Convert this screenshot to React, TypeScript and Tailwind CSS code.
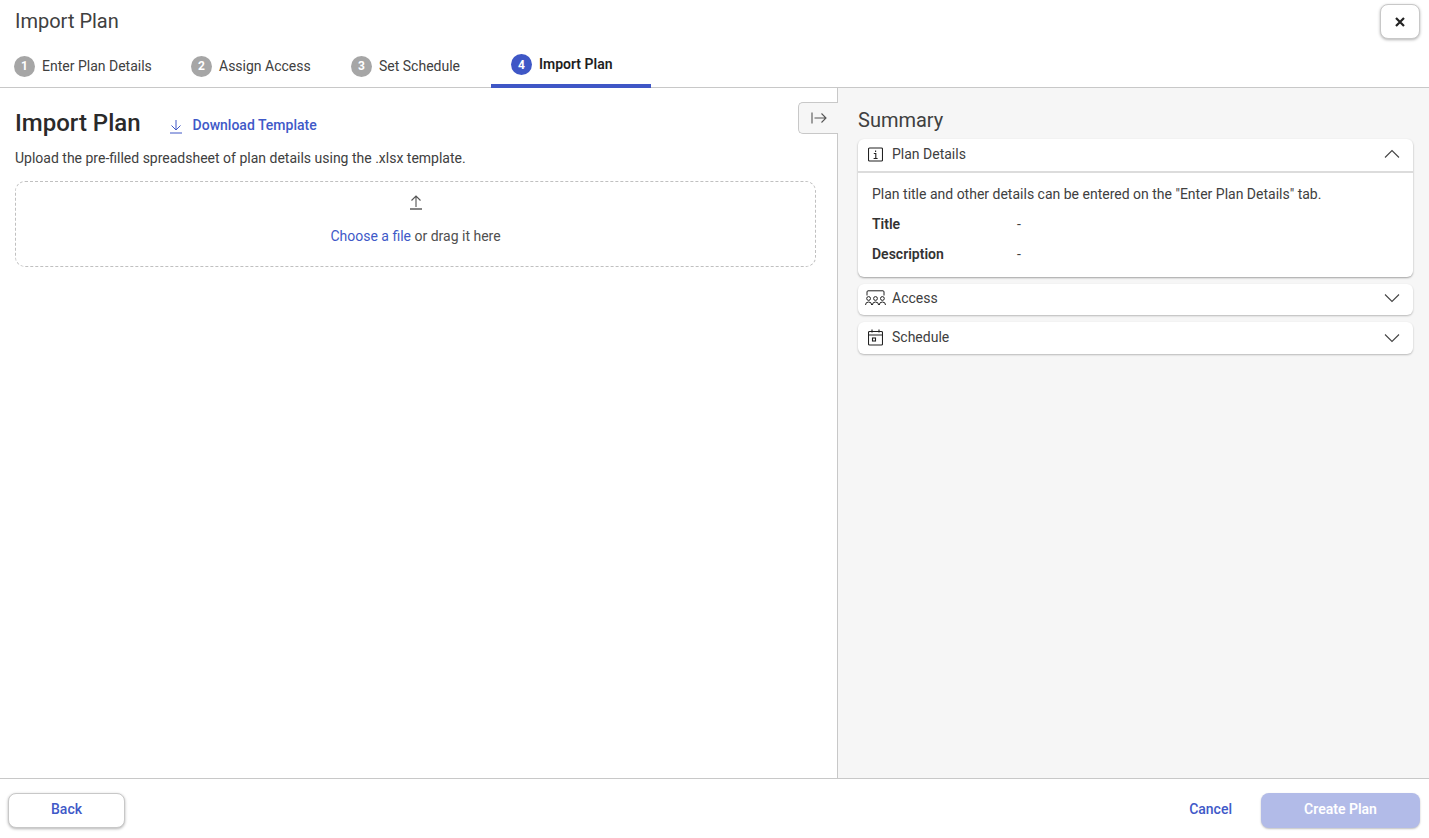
const blue = "text-[#4059c8]";

function Step({ n, label, active, first }: { n: number; label: string; active?: boolean; first?: boolean }) {
  return (
    <div
      className={`flex items-center gap-[7px] ${first ? "w-[171px] pl-[14px]" : "w-[160px] pl-[20px]"} ${
        active ? "h-[40px] pb-[3px] border-b-4 border-[#3f57c6]" : "h-[40px] pb-[4px]"
      }`}
    >
      <span
        className={`flex h-[21px] w-[21px] items-center justify-center rounded-full text-[12px] font-bold text-white ${
          active ? "bg-[#3f57c6]" : "bg-[#a6a6a6]"
        }`}
      >
        {n}
      </span>
      <span className={`text-[14px] ${active ? "font-semibold text-[#1f1f1f]" : "text-[#404040]"}`}>{label}</span>
    </div>
  );
}

function Chevron({ up }: { up?: boolean }) {
  return (
    <svg width="16" height="10" viewBox="0 0 16 10" fill="none" stroke="#444" strokeWidth="1.1">
      <path d={up ? "M1 8.5 L8 1.5 L15 8.5" : "M1 1.5 L8 8.5 L15 1.5"} />
    </svg>
  );
}

function InfoIcon() {
  return (
    <svg width="15" height="15" viewBox="0 0 15 15" fill="none" stroke="#222" strokeWidth="1.1">
      <rect x="0.5" y="1" width="14" height="13" rx="1" />
      <path d="M5.8 6.5 H7.8 V11.5 M5.6 11.5 H9.6 M7.6 3.4 V5" />
    </svg>
  );
}

function AccessIcon() {
  return (
    <svg width="21" height="16" viewBox="0 0 21 16" fill="none" stroke="#222" strokeWidth="1">
      <path d="M2 5.5 V2 Q2 0.8 3 0.8 H18 Q19 0.8 19 2 V5.5" />
      <circle cx="3.6" cy="8.5" r="1.9" />
      <circle cx="10.5" cy="8.5" r="1.9" />
      <circle cx="17.4" cy="8.5" r="1.9" />
      <path d="M0.5 15 Q0.5 12 3.6 12 Q6.7 12 6.7 15 M7.4 15 Q7.4 12 10.5 12 Q13.6 12 13.6 15 M14.3 15 Q14.3 12 17.4 12 Q20.5 12 20.5 15" />
    </svg>
  );
}

function CalendarIcon() {
  return (
    <svg width="15" height="17" viewBox="0 0 15 17" fill="none" stroke="#222" strokeWidth="1.1">
      <rect x="0.5" y="2.5" width="14" height="13.5" rx="1" />
      <path d="M0.5 6 H14.5 M4 0.5 V3.5 M11 0.5 V3.5" />
      <rect x="4.5" y="9" width="3" height="3" />
    </svg>
  );
}

function PanelHeader({ icon, label, up }: { icon: React.ReactNode; label: string; up?: boolean }) {
  return (
    <div className="flex flex-1 items-center justify-between pr-[13px]">
      <div className="flex items-center">
        <span className="flex w-[34px] justify-center">{icon}</span>
        <span className="text-[14px] text-[#404040]">{label}</span>
      </div>
      <Chevron up={up} />
    </div>
  );
}

export default function App() {
  return (
    <div className="flex h-screen w-full flex-col overflow-hidden bg-white font-['Roboto',sans-serif]">
      {/* Header */}
      <div className="relative h-[88px] shrink-0 border-b border-[#c8c8c8]">
        <div className="flex h-[47px] items-start justify-between pl-[15px] pr-[9px]">
          <h1 className="mt-[8px] text-[20px] leading-[26px] text-[#404040]">Import Plan</h1>
          <button className="mt-[4px] flex h-[35px] w-[40px] items-center justify-center rounded-[8px] border border-[#c8c8c8] bg-white shadow-[0_1px_3px_rgba(0,0,0,0.3)]">
            <svg width="12" height="12" viewBox="0 0 12 12" fill="none" stroke="#222" strokeWidth="2.2">
              <path d="M2 2 L10 10 M10 2 L2 10" />
            </svg>
          </button>
        </div>
        <div className="absolute bottom-[-1px] left-0 flex items-center">
          <Step n={1} label="Enter Plan Details" first />
          <Step n={2} label="Assign Access" />
          <Step n={3} label="Set Schedule" />
          <Step n={4} label="Import Plan" active />
        </div>
      </div>

      {/* Body */}
      <div className="flex min-h-0 flex-1">
        <div className="relative w-[838px] shrink-0 border-r border-[#c8c8c8] pl-[15px] pr-[21px] pt-[21px]">
          <div className="flex h-[28px] items-center">
            <h2 className="text-[24px] font-medium leading-[28px] text-[#2a2a2a]">Import Plan</h2>
            <a className={`ml-[28px] mt-[5px] flex items-center gap-[10px] text-[14px] font-medium ${blue}`}>
              <svg width="14" height="16" viewBox="0 0 14 16" fill="none" stroke="#3f57c6" strokeWidth="1">
                <path d="M7 2 V12 M2.5 7.5 L7 12 L11.5 7.5 M1 15 H13" />
              </svg>
              Download Template
            </a>
          </div>
          <p className="mt-[12px] text-[14px] leading-[18px] text-[#404040]">
            Upload the pre-filled spreadsheet of plan details using the .xlsx template.
          </p>
          <div className="mt-[14px] flex h-[86px] flex-col items-center rounded-[10px] border border-dashed border-[#c0c0c0] pt-[12px]">
            <svg width="14" height="16" viewBox="0 0 14 16" fill="none" stroke="#555" strokeWidth="1.1">
              <path d="M7 13 V2 M2.5 6.5 L7 2 L11.5 6.5" />
              <path d="M1 15 H13" stroke="#222" />
            </svg>
            <p className="mt-[17px] text-[14px] leading-[18px] text-[#505050]">
              <span className={blue}>Choose a file</span> or drag it here
            </p>
          </div>
          <button className="absolute right-[-1px] top-[14px] flex h-[32px] w-[40px] items-center justify-center rounded-l-[5px] border border-r-0 border-[#c8c8c8] bg-[#f6f6f6]">
            <svg width="16" height="12" viewBox="0 0 16 12" fill="none" stroke="#555" strokeWidth="1.1">
              <path d="M1 0.5 V11.5 M3.5 6 H15 M10.5 1.5 L15 6 L10.5 10.5" />
            </svg>
          </button>
        </div>

        <div className="flex-1 bg-[#f6f6f6] pl-[20px] pr-[16px] pt-[19px]">
          <h2 className="text-[20px] leading-[26px] text-[#404040]">Summary</h2>
          <div className="mt-[6px] rounded-[6px] bg-white shadow-[0_1px_2px_rgba(0,0,0,0.35)]">
            <div className="flex h-[34px] border-b-2 border-[#dcdcdc] pb-[2px]">
              <PanelHeader icon={<InfoIcon />} label="Plan Details" up />
            </div>
            <div className="h-[104px] px-[14px] pt-[12px] text-[14px] leading-[18px] text-[#404040]">
              <p>Plan title and other details can be entered on the "Enter Plan Details" tab.</p>
              <div className="mt-[12px] flex">
                <span className="w-[145px] font-semibold text-[#333333]">Title</span>
                <span>-</span>
              </div>
              <div className="mt-[12px] flex">
                <span className="w-[145px] font-semibold text-[#333333]">Description</span>
                <span>-</span>
              </div>
            </div>
          </div>
          <div className="mt-[7px] flex h-[31px] rounded-[6px] bg-white pb-[3px] shadow-[0_1px_2px_rgba(0,0,0,0.25)]">
            <PanelHeader icon={<AccessIcon />} label="Access" />
          </div>
          <div className="mt-[7px] flex h-[32px] rounded-[6px] bg-white pb-[1px] shadow-[0_1px_2px_rgba(0,0,0,0.25)]">
            <PanelHeader icon={<CalendarIcon />} label="Schedule" />
          </div>
        </div>
      </div>

      {/* Footer */}
      <div className="flex h-[60px] shrink-0 items-start justify-between border-t border-[#c8c8c8] bg-white pl-[8px] pr-[9px] pt-[14px]">
        <button className={`h-[35px] w-[117px] rounded-[8px] border border-[#c8c8c8] bg-white pb-[2px] text-[14px] font-medium shadow-[0_1px_3px_rgba(0,0,0,0.3)] ${blue}`}>
          Back
        </button>
        <div className="flex items-center gap-[29px]">
          <button className={`pb-[2px] text-[14px] font-medium ${blue}`}>Cancel</button>
          <button className="h-[35px] w-[159px] rounded-[8px] bg-[#b2bbe8] pb-[2px] text-[14px] font-semibold text-white shadow-[0_1px_2px_rgba(0,0,0,0.25)]">
            Create Plan
          </button>
        </div>
      </div>
    </div>
  );
}
